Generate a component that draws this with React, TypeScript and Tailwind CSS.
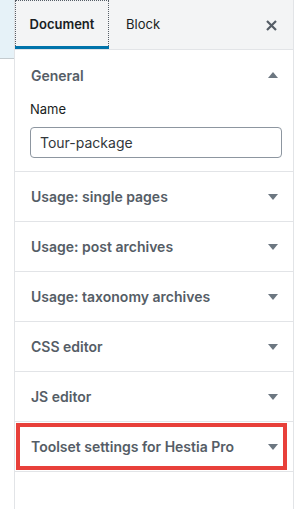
const sections = [
  "Usage: single pages",
  "Usage: post archives",
  "Usage: taxonomy archives",
  "CSS editor",
  "JS editor",
];

function Caret({ up = false }: { up?: boolean }) {
  return (
    <svg width="10" height="6" viewBox="0 0 10 6" className="shrink-0">
      {up ? (
        <path d="M5 0 L10 6 L0 6 Z" fill="#6c7781" />
      ) : (
        <path d="M0 0 L10 0 L5 6 Z" fill="#6c7781" />
      )}
    </svg>
  );
}

function Row({ title }: { title: string }) {
  return (
    <div className="flex h-[50px] items-center justify-between border-b border-[#e2e4e7] pl-4 pr-[15px]">
      <span className="text-[14px] font-semibold text-[#555d66]">{title}</span>
      <Caret />
    </div>
  );
}

export default function App() {
  return (
    <div
      className="flex h-[509px] w-[295px] overflow-hidden bg-white"
      style={{ fontFamily: "Inter, 'Noto Sans', sans-serif" }}
    >
      <div className="w-[14px] shrink-0">
        <div className="h-[59px] border-b border-[#c4cbcf] bg-[#e6f2f8]" />
      </div>
      <div className="flex w-[280px] shrink-0 flex-col border-x border-[#e2e4e7]">
        <div className="flex h-[50px] items-stretch border-b border-[#e2e4e7] bg-[#f3f4f5]">
          <div className="flex w-[94px] flex-col">
            <div className="flex flex-1 items-center justify-center border border-b-0 border-dotted border-[#555d66] pt-[3px] text-[13px] font-semibold text-[#191e23]">
              Document
            </div>
            <div className="h-[3px] bg-[#0073aa]" />
          </div>
          <div className="flex items-center pl-[17px] pt-[1px] text-[13px] text-[#191e23]">
            Block
          </div>
          <div className="ml-auto flex items-center pr-[16px] pt-[1px]">
            <svg width="11" height="11" viewBox="0 0 11 11">
              <path d="M1 1 L10 10 M10 1 L1 10" stroke="#555d66" strokeWidth="2.2" />
            </svg>
          </div>
        </div>

        <div className="border-b border-[#e2e4e7]">
          <div className="flex h-[50px] items-center justify-between pl-4 pr-[15px]">
            <span className="text-[14px] font-semibold text-[#555d66]">General</span>
            <Caret up />
          </div>
          <div className="pb-[13px] pl-[15px] pr-[11px]">
            <div className="text-[13px] leading-[18px] text-[#191e23]">Name</div>
            <div className="mt-[9px] flex h-[31px] items-center rounded-[4px] border border-[#8d96a0] px-[9px] text-[14px] text-[#32373c]">
              Tour-package
            </div>
          </div>
        </div>

        {sections.map((s) => (
          <Row key={s} title={s} />
        ))}

        <div className="relative">
          <Row title="Toolset settings for Hestia Pro" />
          <div className="absolute left-[1px] top-[1px] h-[47px] w-[271px] border-4 border-[#e8403a]" />
        </div>
      </div>
    </div>
  );
}
